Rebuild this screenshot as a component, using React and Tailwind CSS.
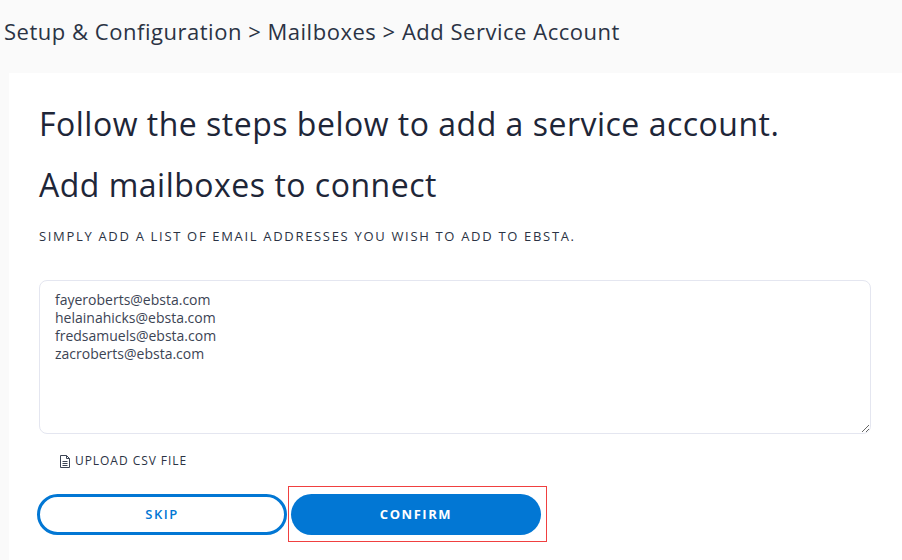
import React from 'react';

const emails = [
  'fayeroberts@ebsta.com',
  'helainahicks@ebsta.com',
  'fredsamuels@ebsta.com',
  'zacroberts@ebsta.com',
];

function FileIcon() {
  return (
    <svg width="12" height="13" viewBox="0 0 12 13" fill="none" stroke="#3c4454" strokeWidth="1" className="shrink-0">
      <path d="M1.5 0.5H7.5L10.5 3.5V12.5H1.5Z" />
      <path d="M7.5 0.5V3.5H10.5" />
      <path d="M3.5 6.5H8.5M3.5 8.5H8.5M3.5 10.5H8.5" />
    </svg>
  );
}

export default function App() {
  return (
    <div className="h-[560px] w-[902px] overflow-hidden bg-[#fafafa] font-['Open_Sans',sans-serif] text-[#1f2937]">
      {/* Breadcrumb */}
      <div className="flex h-[73px] items-start pl-1 pt-[15px]">
        <h2 className="text-[22px] leading-[32px] tracking-[0.52px] text-[#2b3344]">
          Setup &amp; Configuration &gt; Mailboxes &gt; Add Service Account
        </h2>
      </div>

      {/* Card */}
      <div className="ml-[9px] h-[487px] bg-white pl-[30px] pr-[31px] pt-[27px]">
        <h1 className="text-[32px] leading-[48px] tracking-[0.5px] text-[#1e2638]">
          Follow the steps below to add a service account.
        </h1>
        <h2 className="mt-[13px] text-[32px] leading-[48px] tracking-[0.5px] text-[#1e2638]">Add mailboxes to connect</h2>
        <p className="mt-[18px] text-[13px] leading-[18px] tracking-[1.68px] text-[#2b3344]">
          SIMPLY ADD A LIST OF EMAIL ADDRESSES YOU WISH TO ADD TO EBSTA.
        </p>

        <textarea
          defaultValue={emails.join('\n')}
          className="mt-[35px] block h-[154px] w-[832px] rounded-lg border border-[#e4e6f0] py-[10px] pl-[15px] pr-4 text-[14px] leading-[18px] text-[#3c4454] outline-none"
        />

        <div className="mt-[19px] flex items-center gap-[4px] pl-[20px]">
          <FileIcon />
          <span className="text-[12px] leading-[16px] tracking-[0.95px] text-[#2b3344]">UPLOAD CSV FILE</span>
        </div>

        <div className="mt-[25px] flex items-start">
          <button className="-ml-[2px] h-[41px] w-[250px] rounded-full border-[3px] border-[#0277d4] bg-white text-[13px] font-semibold tracking-[1.55px] text-[#0277d4]">
            SKIP
          </button>
          <div className="relative ml-[4px]">
            <button className="block h-[41px] w-[250px] rounded-full bg-[#0277d4] text-[13px] font-bold tracking-[1.55px] text-white">
              CONFIRM
            </button>
            <div className="pointer-events-none absolute -left-[3px] -top-[8px] h-[56px] w-[259px] border border-[#f04040]" />
          </div>
        </div>
      </div>
    </div>
  );
}
